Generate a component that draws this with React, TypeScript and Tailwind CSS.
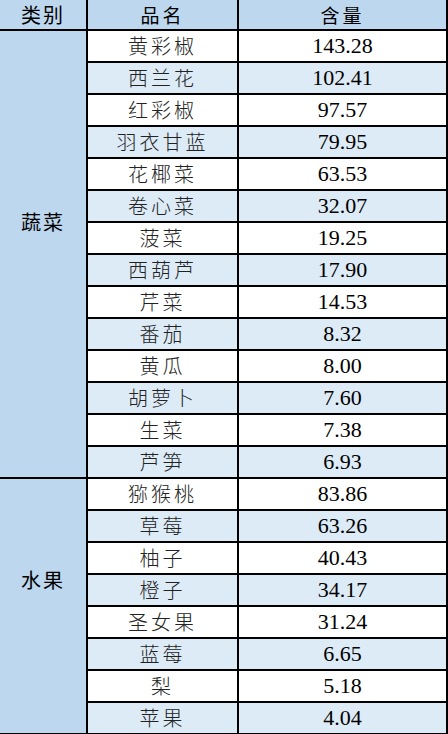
const groups = [
  {
    name: "蔬菜",
    pad: "pb-[64px]",
    items: [
      ["黄彩椒", "143.28"],
      ["西兰花", "102.41"],
      ["红彩椒", "97.57"],
      ["羽衣甘蓝", "79.95"],
      ["花椰菜", "63.53"],
      ["卷心菜", "32.07"],
      ["菠菜", "19.25"],
      ["西葫芦", "17.90"],
      ["芹菜", "14.53"],
      ["番茄", "8.32"],
      ["黄瓜", "8.00"],
      ["胡萝卜", "7.60"],
      ["生菜", "7.38"],
      ["芦笋", "6.93"],
    ],
  },
  {
    name: "水果",
    pad: "pb-[52px]",
    items: [
      ["猕猴桃", "83.86"],
      ["草莓", "63.26"],
      ["柚子", "40.43"],
      ["橙子", "34.17"],
      ["圣女果", "31.24"],
      ["蓝莓", "6.65"],
      ["梨", "5.18"],
      ["苹果", "4.04"],
    ],
  },
];

export default function App() {
  return (
    <div className="w-[448px] h-[734px] overflow-hidden bg-white font-['Noto_Sans_CJK_SC',sans-serif]">
      <table className="w-[447px] border-collapse table-fixed text-black">
        <colgroup>
          <col className="w-[87px]" />
          <col className="w-[151px]" />
          <col className="w-[209px]" />
        </colgroup>
        <thead>
          <tr className="h-[30px] bg-[#bdd7ee]">
            <th className="border-r-2 border-b-2 border-black p-0 text-[20px] font-normal tracking-[2px] leading-none">
              类别
            </th>
            <th className="border-r-2 border-b-2 border-black p-0 text-[19px] font-normal tracking-[3px] leading-none">
              品名
            </th>
            <th className="border-r-2 border-b-2 border-black p-0 text-[19px] font-normal tracking-[3px] leading-none">
              含量
            </th>
          </tr>
        </thead>
        <tbody>
          {groups.map((g) =>
            g.items.map(([item, value], i) => (
              <tr key={item} className={i % 2 === 1 ? "h-[32px] bg-[#ddebf7]" : "h-[32px] bg-white"}>
                {i === 0 && (
                  <td
                    rowSpan={g.items.length}
                    className={`border-r-2 border-b-2 border-black bg-[#bdd7ee] p-0 text-center align-middle text-[20px] font-normal tracking-[2px] ${g.pad}`}
                  >
                    {g.name}
                  </td>
                )}
                <td className="border-r-2 border-b-2 border-black p-0 text-center text-[20px] font-light tracking-[3px] leading-none text-[#222]">
                  {item}
                </td>
                <td className="border-r-2 border-b-2 border-black p-0 text-center text-[22px] leading-none font-['Liberation_Serif',serif]">
                  {value}
                </td>
              </tr>
            ))
          )}
        </tbody>
      </table>
    </div>
  );
}
